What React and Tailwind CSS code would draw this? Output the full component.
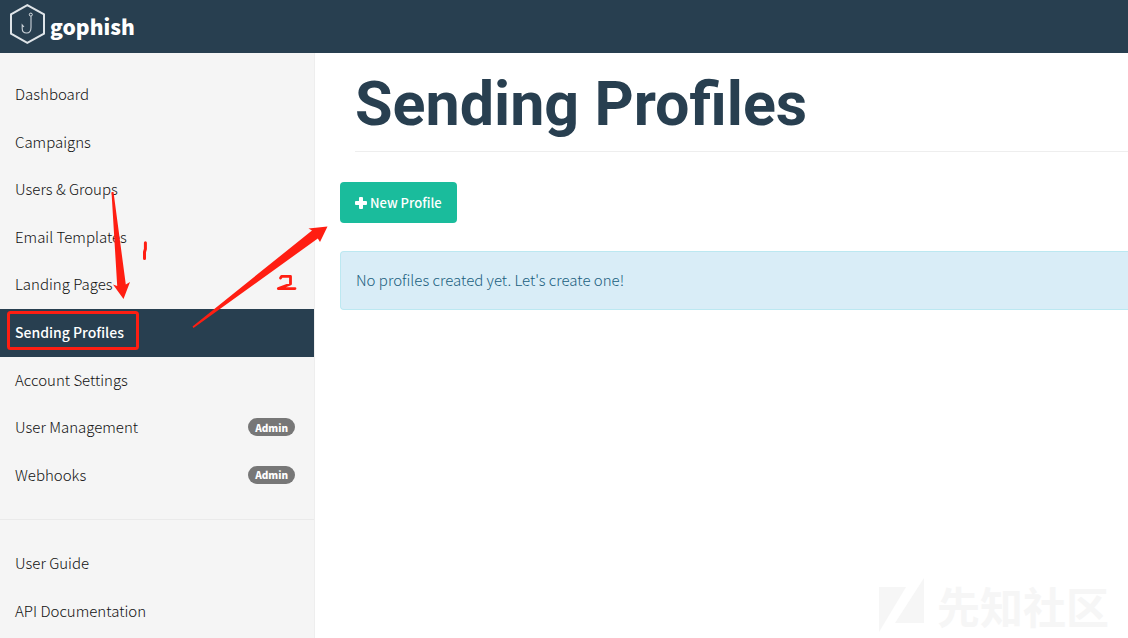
import React from "react";

const mainLinks = [
  { label: "Dashboard" },
  { label: "Campaigns" },
  { label: "Users & Groups" },
  { label: "Email Templates" },
  { label: "Landing Pages" },
  { label: "Sending Profiles", active: true },
  { label: "Account Settings" },
  { label: "User Management", admin: true },
  { label: "Webhooks", admin: true },
];

const helpLinks = [{ label: "User Guide" }, { label: "API Documentation" }];

function NavItem({ label, active, admin }) {
  return (
    <li>
      <a
        href="#"
        aria-current={active ? "page" : undefined}
        className={
          active
            ? "flex items-center justify-between bg-[#283f50] pt-3 pb-[14px] pl-[15px] pr-[19px] text-[14px] leading-[22px] font-medium text-white"
            : "flex items-center justify-between pt-3 pb-[13px] pl-[15px] pr-[19px] text-[15px] leading-normal font-light text-[#111111]"
        }
      >
        {label}
        {admin && (
          <span className="flex h-[18px] items-center rounded-full bg-[#777777] px-[7px] text-[10px] font-black text-white">
            Admin
          </span>
        )}
      </a>
    </li>
  );
}

function Logo() {
  return (
    <svg width="36" height="40" viewBox="0 0 36 40" fill="none" aria-hidden="true">
      <path d="M18.3 1.2 35 10.4V29.6L18.3 38.8 2 29.6V10.4Z" stroke="#dfe4e8" strokeWidth="2" />
      <circle cx="21.8" cy="10.6" r="1.5" stroke="#dfe4e8" strokeWidth="1" />
      <path d="M22 12.2V23.5C22 27 20.2 29 17.6 29C14.8 29 13.2 27 13.2 24.5V21L15 23" stroke="#cfd6dc" strokeWidth="1.1" />
    </svg>
  );
}

function PlusIcon() {
  return (
    <svg width="12" height="12" viewBox="0 0 12 12" fill="currentColor" aria-hidden="true">
      <path d="M4.9 0H7.1Q8 0 8 .9V4H11.1Q12 4 12 4.9V7.1Q12 8 11.1 8H8V11.1Q8 12 7.1 12H4.9Q4 12 4 11.1V8H.9Q0 8 0 7.1V4.9Q0 4 .9 4H4V.9Q4 0 4.9 0Z" />
    </svg>
  );
}

function Annotations() {
  return (
    <svg className="pointer-events-none absolute top-0 left-0" width="340" height="370" viewBox="0 0 340 370" fill="none" aria-hidden="true">
      <path d="M111.5 192 113.5 192 125.8 284.5 130 282 123.5 299 113 284.5 117.2 286Z" fill="#ff1e12" />
      <path d="M192.5 326.5 312 230.5 308.5 228.5 327.5 226.5 320 242 317.8 238.5 193.5 328Z" fill="#ff1e12" />
      <path d="M145.4 242.8V249L144.5 252V258.5" stroke="#ff1e12" strokeWidth="3" strokeLinecap="round" />
      <path d="M280.5 278 281.5 276.4H290.5V284L278.3 288.6H295" stroke="#ff1e12" strokeWidth="2.8" strokeLinecap="round" strokeLinejoin="round" />
      <rect x="8.5" y="312.5" width="129" height="36" rx="2" stroke="#ff1e12" strokeWidth="3" />
    </svg>
  );
}

function Watermark() {
  return (
    <div className="pointer-events-none absolute right-[19px] bottom-[3px] flex items-center gap-3 text-[#f6f6f6]">
      <svg width="46" height="55" viewBox="0 0 46 55" fill="currentColor" aria-hidden="true">
        <path d="M0 9H27L0 54ZM45 0V45H16Z" />
      </svg>
      <span className="text-[43px] leading-[60px] font-bold">先知社区</span>
    </div>
  );
}

export default function App() {
  return (
    <div className="relative flex min-h-screen flex-col overflow-hidden bg-white font-['Noto_Sans_CJK_SC',sans-serif]">
      <header className="flex h-[53px] items-center bg-[#283f50] pl-[9px] pb-[5px]">
        <a href="#" className="flex items-center gap-[5px] text-white">
          <Logo />
          <span className="pt-1 text-[21px] leading-8 font-black">gophish</span>
        </a>
      </header>
      <div className="flex flex-1">
        <nav className="w-[315px] shrink-0 border-r border-[#eeeeee] bg-[#f5f5f5] pt-[18px]">
          <ul>
            {mainLinks.map((item) => (
              <NavItem key={item.label} {...item} />
            ))}
          </ul>
          <hr className="my-5 border-[#eaeaea]" />
          <ul>
            {helpLinks.map((item) => (
              <NavItem key={item.label} {...item} />
            ))}
          </ul>
        </nav>
        <main className="min-w-0 flex-1 pl-[25px]">
          <h1 className="ml-[15px] border-b border-[#eeeeee] pt-[17px] pb-[13px] font-[Roboto,sans-serif] text-[61px] leading-[68px] font-bold text-[#283f50]">
            Sending Profiles
          </h1>
          <button
            type="button"
            className="mt-[30px] flex h-[41px] items-center gap-[3px] rounded-sm bg-[#1abc9c] px-[15px] text-[13px] font-medium text-white"
          >
            <PlusIcon />
            New Profile
          </button>
          <p className="mt-7 rounded-l-sm border border-r-0 border-[#bce8f1] bg-[#d9edf7] pt-4 pb-[18px] pl-[15px] text-[15px] leading-[23px] font-light text-[#205f80]">
            No profiles created yet. Let's create one!
          </p>
        </main>
      </div>
      <Watermark />
      <Annotations />
    </div>
  );
}
